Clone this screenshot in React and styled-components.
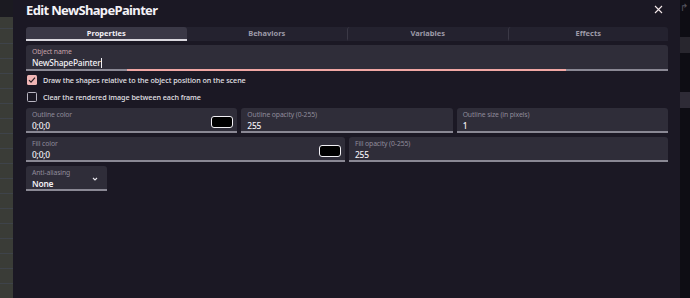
import React from 'react'
import styled, { createGlobalStyle } from 'styled-components'

const Global = createGlobalStyle`
  html, body { margin: 0; padding: 0; background: #1b1924; }
  * { box-sizing: border-box; }
  body { font-family: "Noto Sans", "Open Sans", sans-serif; }
`

const Page = styled.div`
  display: flex;
  width: 690px;
  height: 298px;
  overflow: hidden;
`

const LeftStrip = styled.div`
  width: 13px;
  display: flex;
  flex-direction: column;
  background: #3a3c37;
  background-image: repeating-linear-gradient(0deg, transparent 0 14px, rgba(70, 80, 110, 0.35) 14px 15px);

  &::before {
    content: '';
    display: block;
    height: 17px;
    background: #1b1a21;
  }
`

const RightStrip = styled.div`
  width: 10px;
  background: #0e0d14;
  display: flex;
  flex-direction: column;
  color: #55535e;
  font-size: 10px;
  line-height: 12px;
  padding-top: 1px;
`

const StripBlock = styled.div`
  height: 16px;
  margin-top: ${p => p.$top}px;
  background: ${p => p.$color};
`

const Dialog = styled.div`
  flex: 1;
  background: #1b1824;
  padding: 0 12px 0 13px;
  display: flex;
  flex-direction: column;
`

const Header = styled.div`
  height: 27px;
  display: flex;
  align-items: flex-start;
  justify-content: space-between;
`

const Title = styled.h1`
  margin: 1px 0 0;
  font-size: 13px;
  font-weight: 700;
  color: #f4f2f7;
  letter-spacing: -0.65px;
  line-height: 18px;
`

const Close = styled.button`
  border: 0;
  background: none;
  padding: 0;
  margin: 5px 5px 0 0;
  width: 9px;
  height: 9px;
  display: flex;
  align-items: center;
  justify-content: center;
`

const Tabs = styled.div`
  display: grid;
  grid-template-columns: repeat(4, 1fr);
  height: 14px;
  background: #24222f;
  border-radius: 3px 3px 0 0;
`

const Tab = styled.div`
  display: flex;
  align-items: center;
  justify-content: center;
  font-size: 7.5px;
  font-weight: 700;
  color: ${p => (p.$active ? '#f2f0f5' : '#9d9aa8')};
  background: ${p => (p.$active ? '#3a3846' : 'transparent')};
  border-radius: 3px 3px 0 0;
  border-bottom: 2px solid ${p => (p.$active ? '#d9d7de' : 'transparent')};
  border-left: ${p => (p.$sep ? '1px solid #3b3946' : '0')};
`

const Body = styled.div`
  display: flex;
  flex-direction: column;
  margin-top: 4px;
`

const Row = styled.div`
  display: flex;
  gap: 4px;
  margin-top: ${p => (p.$mt !== undefined ? p.$mt : 4)}px;
`

const Field = styled.div`
  position: relative;
  flex: ${p => (p.$width ? `0 0 ${p.$width}px` : '1 1 0')};
  height: ${p => p.$height || 25}px;
  background: #2f2d39;
  border-radius: 3px 3px 0 0;
  border-bottom: 2px solid #8a8894;
  padding: 3px 6px 0 6px;
  display: flex;
  align-items: flex-end;
  justify-content: space-between;
`

const FocusLine = styled.div`
  position: absolute;
  left: 101px;
  right: 102px;
  bottom: -2px;
  height: 2px;
  background: #f1a7a4;
`

const FieldText = styled.div`
  display: flex;
  flex-direction: column;
  align-self: stretch;
`

const Label = styled.div`
  font-size: 6.8px;
  line-height: 8px;
  letter-spacing: -0.1px;
  color: ${p => (p.$focused ? '#c9a3ab' : '#8f8c9b')};
  white-space: nowrap;
`

const Value = styled.div`
  font-size: 8.4px;
  line-height: 12px;
  margin-top: 1px;
  letter-spacing: -0.2px;
  color: #f2f0f5;
  font-weight: ${p => (p.$strong ? 600 : 500)};
  display: flex;
  align-items: center;
`

const Caret = styled.span`
  display: inline-block;
  width: 1px;
  height: 10px;
  background: #f2f0f5;
  margin-left: 0.5px;
`

const Swatch = styled.div`
  width: 22px;
  height: 12px;
  border: 1.5px solid #f2f0f5;
  border-radius: 3px;
  background: #000;
  margin: 0 -2px 3px 0;
`

const Chevron = styled.div`
  margin: 0 3px 8px 0;
  display: flex;
`

const CheckRow = styled.label`
  display: flex;
  align-items: center;
  gap: 6px;
  height: 17px;
  padding-left: 1px;
  font-size: 7.2px;
  letter-spacing: -0.05px;
  color: #e4e2e8;
  font-weight: 500;
`

const Box = styled.span`
  width: 10px;
  height: 10px;
  border-radius: 1.5px;
  display: flex;
  align-items: center;
  justify-content: center;
  background: ${p => (p.$checked ? '#f0b5b5' : 'transparent')};
  border: ${p => (p.$checked ? '0' : '1.3px solid #b9b6c2')};
`

function App() {
  return (
    <>
      <Global />
      <Page>
        <LeftStrip />
        <Dialog>
          <Header>
            <Title>Edit NewShapePainter</Title>
            <Close>
              <svg width="9" height="9" viewBox="0 0 9 9">
                <path d="M1 1L8 8M8 1L1 8" stroke="#f4e8ea" strokeWidth="1.1" />
              </svg>
            </Close>
          </Header>

          <Tabs>
            <Tab $active>Properties</Tab>
            <Tab>Behaviors</Tab>
            <Tab $sep>Variables</Tab>
            <Tab $sep>Effects</Tab>
          </Tabs>

          <Body>
            <Row $mt={0}>
              <Field $height={26}>
                <FieldText>
                  <Label $focused>Object name</Label>
                  <Value>NewShapePainter<Caret /></Value>
                </FieldText>
                <FocusLine />
              </Field>
            </Row>

            <CheckRow>
              <Box $checked>
                <svg width="8" height="8" viewBox="0 0 8 8">
                  <path d="M1 4.2L3 6.2L7 1.6" stroke="#2a1f26" strokeWidth="1.2" fill="none" />
                </svg>
              </Box>
              Draw the shapes relative to the object position on the scene
            </CheckRow>
            <CheckRow>
              <Box />
              Clear the rendered image between each frame
            </CheckRow>

            <Row $mt={3}>
              <Field>
                <FieldText>
                  <Label>Outline color</Label>
                  <Value>0;0;0</Value>
                </FieldText>
                <Swatch />
              </Field>
              <Field>
                <FieldText>
                  <Label>Outline opacity (0-255)</Label>
                  <Value>255</Value>
                </FieldText>
              </Field>
              <Field>
                <FieldText>
                  <Label>Outline size (in pixels)</Label>
                  <Value>1</Value>
                </FieldText>
              </Field>
            </Row>

            <Row>
              <Field>
                <FieldText>
                  <Label>Fill color</Label>
                  <Value>0;0;0</Value>
                </FieldText>
                <Swatch />
              </Field>
              <Field>
                <FieldText>
                  <Label>Fill opacity (0-255)</Label>
                  <Value>255</Value>
                </FieldText>
              </Field>
            </Row>

            <Row>
              <Field $width={81}>
                <FieldText>
                  <Label>Anti-aliasing</Label>
                  <Value $strong>None</Value>
                </FieldText>
                <Chevron>
                  <svg width="6" height="4" viewBox="0 0 6 4">
                    <path d="M1 1L3 3L5 1" stroke="#e8e6ec" strokeWidth="1.1" fill="none" />
                  </svg>
                </Chevron>
              </Field>
            </Row>
          </Body>
        </Dialog>
        <RightStrip>
          <span>↱</span>
          <StripBlock $top={24} $color="#28262e" />
          <StripBlock $top={39} $color="#2e2b36" />
        </RightStrip>
      </Page>
    </>
  )
}

export default App
